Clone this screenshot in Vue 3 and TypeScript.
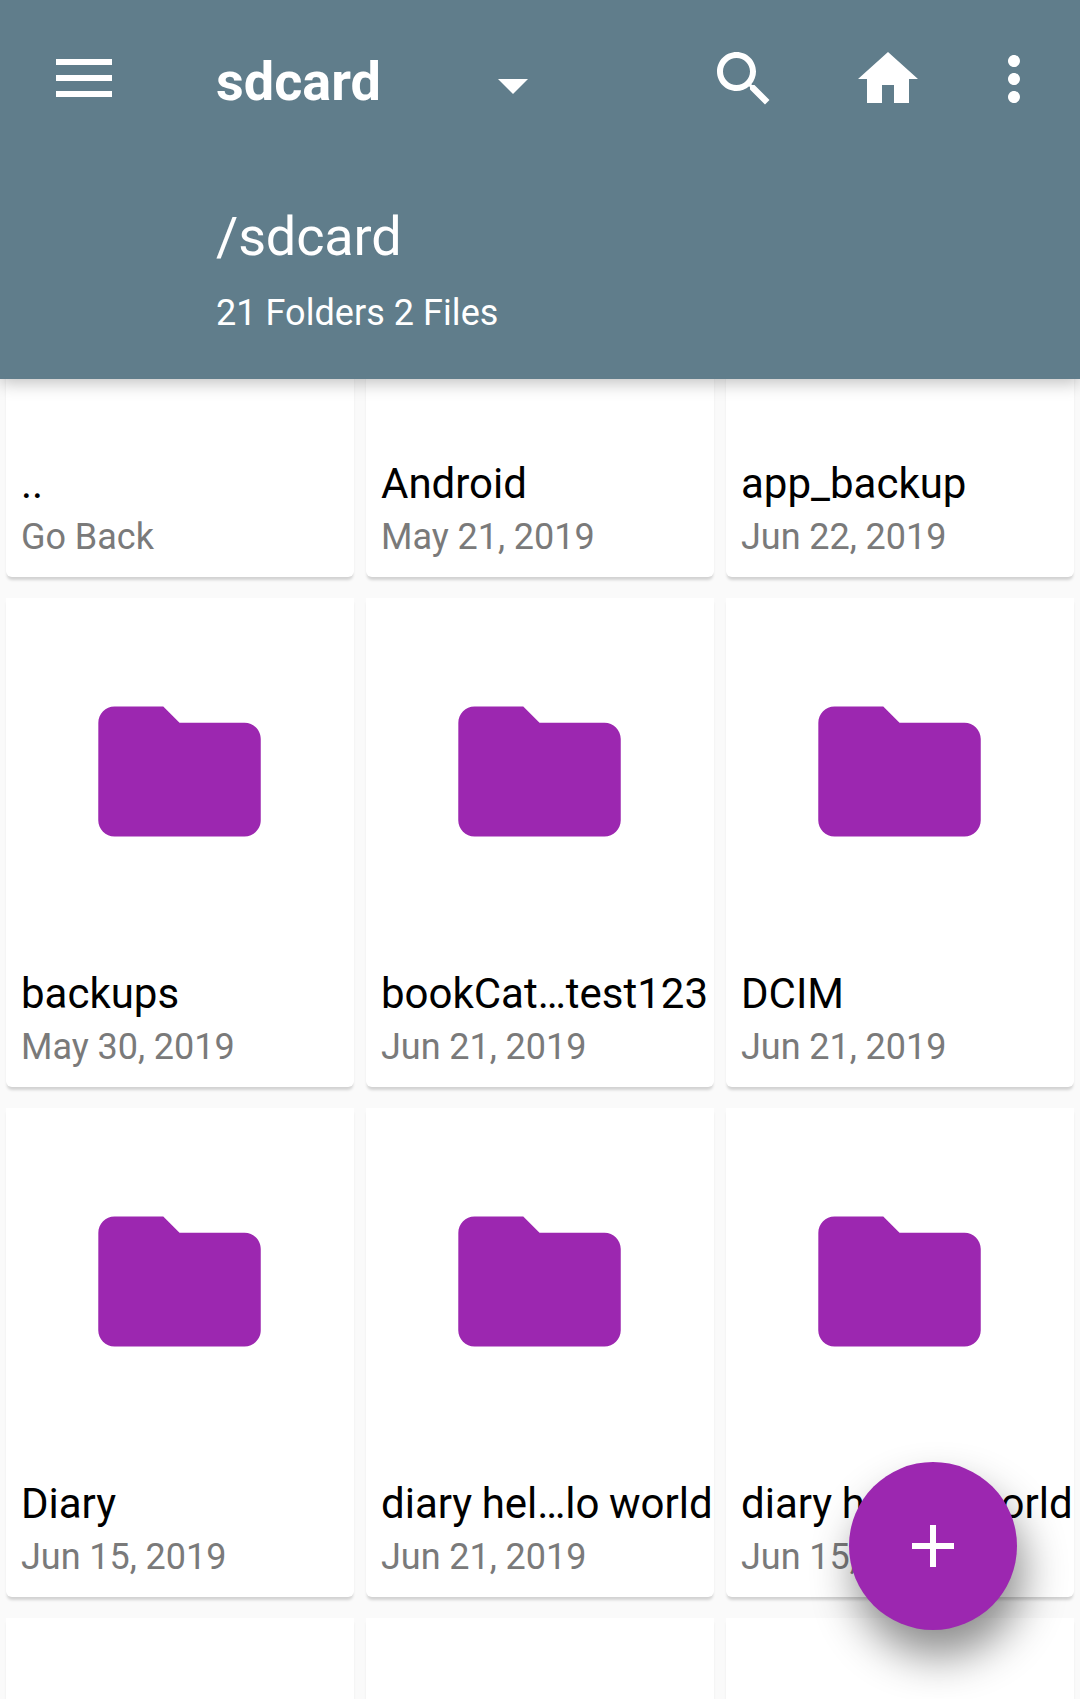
<script setup lang="ts">
interface Entry {
  name: string;
  date: string;
}

const entries: Entry[] = [
  { name: "..", date: "Go Back" },
  { name: "Android", date: "May 21, 2019" },
  { name: "app_backup", date: "Jun 22, 2019" },
  { name: "backups", date: "May 30, 2019" },
  { name: "bookCat…test123", date: "Jun 21, 2019" },
  { name: "DCIM", date: "Jun 21, 2019" },
  { name: "Diary", date: "Jun 15, 2019" },
  { name: "diary hel…lo world", date: "Jun 21, 2019" },
  { name: "diary hel…lo world", date: "Jun 15, 2019" },
  // next row is only just scrolled into view, nothing of it readable yet
  { name: "", date: "" },
  { name: "", date: "" },
  { name: "", date: "" },
];
</script>

<template>
  <div class="screen">
    <header class="appbar">
      <div class="toolbar">
        <svg class="menu" viewBox="0 0 56 38"><path d="M0 0h56v6H0zM0 16h56v6H0zM0 32h56v6H0z" /></svg>
        <span class="title">sdcard</span>
        <svg class="arrow" viewBox="0 0 30 15"><path d="M0 0h30L15 15z" /></svg>
        <svg class="icon search" viewBox="0 0 24 24"><path d="M15.5 14h-.79l-.28-.27C15.41 12.59 16 11.11 16 9.5 16 5.91 13.09 3 9.5 3S3 5.91 3 9.5 5.91 16 9.5 16c1.61 0 3.09-.59 4.23-1.57l.27.28v.79l5 4.99L20.49 19l-4.99-5zm-6 0C7.01 14 5 11.99 5 9.5S7.01 5 9.5 5 14 7.01 14 9.5 11.99 14 9.5 14z" /></svg>
        <svg class="icon home" viewBox="0 0 24 24"><path d="M10 20v-6h4v6h5v-8h3L12 3 2 12h3v8z" /></svg>
        <svg class="icon more" viewBox="0 0 24 24"><path d="M12 8c1.1 0 2-.9 2-2s-.9-2-2-2-2 .9-2 2 .9 2 2 2zm0 2c-1.1 0-2 .9-2 2s.9 2 2 2 2-.9 2-2-.9-2-2-2zm0 6c-1.1 0-2 .9-2 2s.9 2 2 2 2-.9 2-2-.9-2-2-2z" /></svg>
      </div>
      <div class="path">/sdcard</div>
      <div class="count">21 Folders 2 Files</div>
    </header>

    <main class="list">
      <div class="grid">
        <div v-for="(entry, i) in entries" :key="i" class="card">
          <svg class="folder" viewBox="0 0 24 24"><path d="M10 4H4c-1.1 0-1.99.9-1.99 2L2 18c0 1.1.9 2 2 2h16c1.1 0 2-.9 2-2V8c0-1.1-.9-2-2-2h-8l-2-2z" /></svg>
          <template v-if="entry.name">
            <div class="name">{{ entry.name }}</div>
            <div class="date">{{ entry.date }}</div>
          </template>
        </div>
      </div>
    </main>

    <button class="fab">
      <svg viewBox="0 0 24 24"><path d="M19 13h-6v6h-2v-6H5v-2h6V5h2v6h6v2z" /></svg>
    </button>
  </div>
</template>

<style>
html,
body {
  margin: 0;
  background: #fafafa;
}
</style>

<style scoped>
.screen {
  position: relative;
  width: 1080px;
  height: 1699px;
  overflow: hidden;
  background: #fafafa;
  font-family: Roboto, "Noto Sans", sans-serif;
}
.appbar {
  position: relative;
  z-index: 2;
  box-sizing: border-box;
  height: 379px;
  padding-top: 43px;
  background: #607d8b;
  color: #fff;
  box-shadow: 0 4px 16px rgba(0, 0, 0, 0.25);
}
.toolbar {
  display: flex;
  align-items: flex-start;
  height: 72px;
}
.icon {
  width: 72px;
  height: 72px;
  flex: none;
  fill: #fff;
}
.menu {
  flex: none;
  width: 56px;
  height: 38px;
  margin: 16px 0 0 56px;
  fill: #fff;
}
.title {
  flex: none;
  width: 282px;
  margin: 3px 0 0 104px;
  font-size: 54px;
  line-height: 72px;
  font-weight: 700;
}
.arrow {
  flex: none;
  width: 30px;
  height: 15px;
  margin-top: 36px;
  fill: #fff;
}
.search {
  margin-left: 180px;
}
.home {
  margin-left: 72px;
}
.more {
  margin-left: 54px;
}
.path {
  margin: 90px 0 0 216px;
  font-size: 54px;
  line-height: 64px;
  letter-spacing: -0.15px;
}
.count {
  margin: 22px 0 0 216px;
  font-size: 36px;
  line-height: 44px;
  letter-spacing: 0.05px;
}
.list {
  height: 1320px;
  overflow: hidden;
}
.grid {
  display: grid;
  grid-template-columns: repeat(3, 348px);
  column-gap: 12px;
  row-gap: 21px;
  padding: 0 6px;
  margin-top: -291px;
}
.card {
  box-sizing: border-box;
  height: 489px;
  padding: 76px 0 0 15px;
  background: #fff;
  border-radius: 0 0 6px 6px;
  box-shadow: 0 4px 3px -1px rgba(0, 0, 0, 0.16);
  white-space: nowrap;
}
.folder {
  display: block;
  width: 195px;
  height: 195px;
  margin-left: 61px;
  fill: #9c27b0;
}
.name {
  margin-top: 97px;
  font-size: 42px;
  line-height: 56px;
  word-spacing: -1px;
  color: #000;
}
.date {
  font-size: 36px;
  line-height: 50px;
  word-spacing: -0.2px;
  color: #7a7a7a;
}
.fab {
  position: absolute;
  left: 849px;
  top: 1462px;
  z-index: 3;
  display: flex;
  align-items: center;
  justify-content: center;
  width: 168px;
  height: 168px;
  padding: 0;
  border: none;
  border-radius: 50%;
  background: #9c27b0;
  box-shadow: 6px 26px 44px rgba(0, 0, 0, 0.45);
}
.fab svg {
  width: 72px;
  height: 72px;
  fill: #fff;
}
</style>
